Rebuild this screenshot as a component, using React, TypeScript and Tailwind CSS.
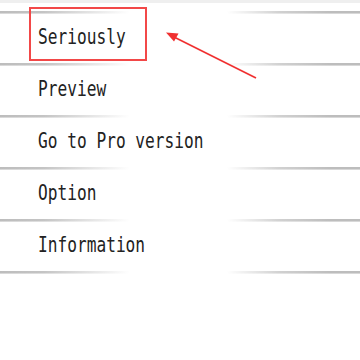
import React from "react";

const items = ["Seriously", "Preview", "Go to Pro version", "Option", "Information"];

function Divider() {
  return (
    <div className="flex flex-col">
      <div className="h-[2px] bg-[linear-gradient(to_right,#bdbdbd_0%,#c4c4c4_12%,#ffffff_36%,#ffffff_63%,#d0d0d0_78%,#bdbdbd_92%,#bdbdbd_100%)]" />
      <div className="h-[1px] bg-[linear-gradient(to_right,#d8d8d8_0%,#dedede_12%,#ffffff_36%,#ffffff_63%,#e4e4e4_78%,#d8d8d8_92%,#d8d8d8_100%)]" />
    </div>
  );
}

export default function App() {
  return (
    <div className="relative w-[360px] h-[360px] bg-white overflow-hidden">
      <div className="h-[3px] bg-[#efefef]" />
      <div className="h-[8px]" />
      <Divider />
      {items.map((t) => (
        <div key={t}>
          <div className="h-[49px] flex items-center pl-[38px] pb-[2px]">
            <span
              className="inline-block origin-left scale-x-[0.77] text-[21px] leading-none text-[#222] whitespace-pre"
              style={{ fontFamily: '"DejaVu Sans Mono", monospace' }}
            >
              {t}
            </span>
          </div>
          <Divider />
        </div>
      ))}
      <div className="absolute left-[29px] top-[7px] w-[118px] h-[54px] border-2 border-[#f24848]" />
      <svg className="absolute left-0 top-0" width="360" height="360" viewBox="0 0 360 360">
        <line x1="256" y1="78" x2="174" y2="37" stroke="#f03030" strokeWidth="1.6" />
        <polygon points="166,32.5 178.5,33.5 174,41.5" fill="#f03030" />
      </svg>
    </div>
  );
}
